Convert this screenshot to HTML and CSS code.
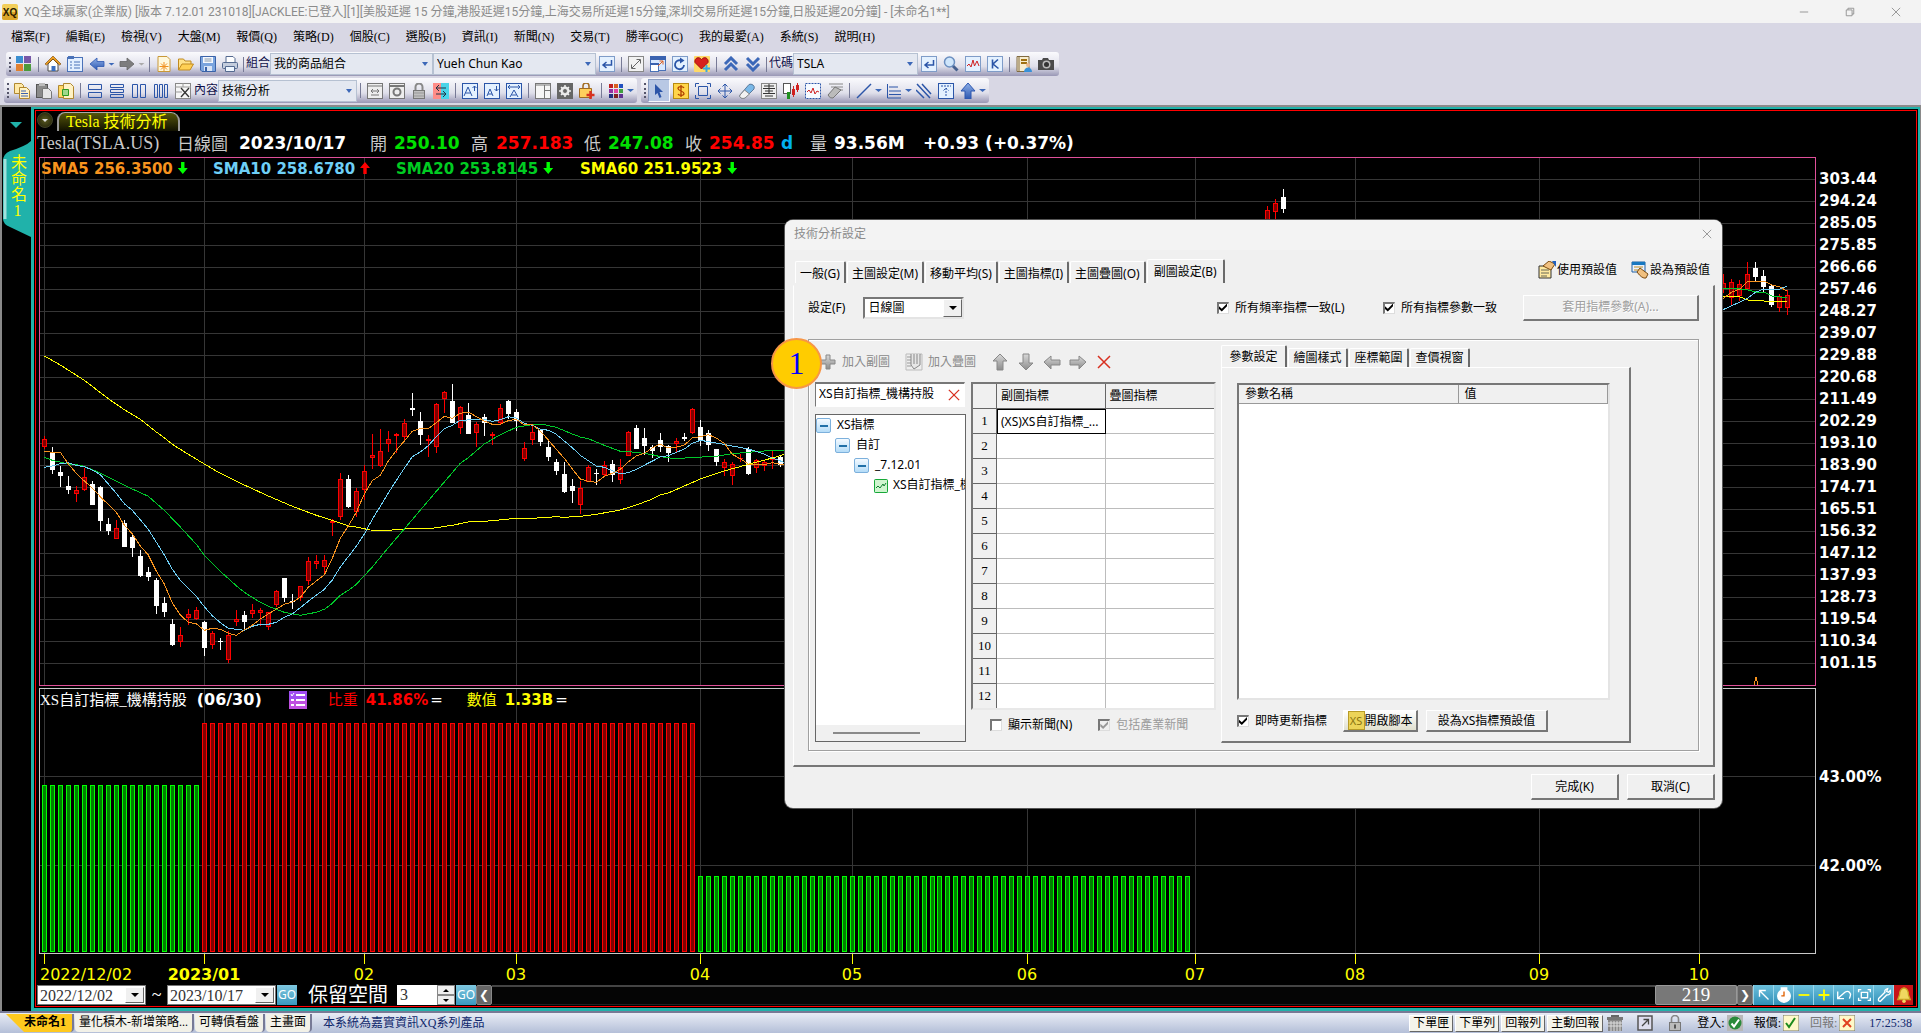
FILE: index.html
```html
<!DOCTYPE html>
<html lang="zh-Hant">
<head>
<meta charset="utf-8">
<title>XQ全球贏家</title>
<link rel="stylesheet" href="styles.css">
</head>
<body>
<svg class="defs" aria-hidden="true">
  <linearGradient id="gb" x1="0" y1="0" x2="0" y2="1"><stop offset="0" stop-color="#8fb0e8"/><stop offset="1" stop-color="#2c57b0"/></linearGradient>
  <linearGradient id="gg" x1="0" y1="0" x2="0" y2="1"><stop offset="0" stop-color="#d8d8d8"/><stop offset="1" stop-color="#8c8c8c"/></linearGradient>
  <symbol id="enter" viewBox="0 0 16 16"><rect x=".5" y=".5" width="15" height="15" fill="#e4f1ff" stroke="#7f9cc8"/><path d="M12.500 4v5H5M7.500 6L4 9l3.500 3" fill="none" stroke="#2b55a8" stroke-width="1.500"/></symbol>
  <symbol id="larrow" viewBox="0 0 16 16"><path d="M1 8l7-6v3.500h7v5H8V14z" stroke-width=".8"/></symbol>
</svg>

<header class="titlebar">
  <svg class="logo" viewBox="0 0 16 16"><rect width="16" height="16" rx="2" fill="#f3cf5a"/><rect y="8" width="16" height="8" rx="2" fill="#dba62a"/><text x="8" y="12" font-size="10" font-weight="bold" text-anchor="middle" fill="#2a1a00" font-family="Liberation Sans, sans-serif">XQ</text></svg>
  <h1>XQ全球贏家(企業版) [版本 7.12.01 231018][JACKLEE:已登入][1][美股延遲 15 分鐘,港股延遲15分鐘,上海交易所延遲15分鐘,深圳交易所延遲15分鐘,日股延遲20分鐘] - [未命名1**]</h1>
  <div class="winbtns">
    <button aria-label="最小化"><svg viewBox="0 0 12 12"><path d="M1 6h10"/></svg></button>
    <button aria-label="還原"><svg viewBox="0 0 12 12"><path d="M1.500 3.500h7v7h-7zM3.500 3.500v-2h7v7h-2"/></svg></button>
    <button aria-label="關閉"><svg viewBox="0 0 12 12"><path d="M1 1l10 10M11 1L1 11"/></svg></button>
  </div>
</header>

<nav class="menu">
  <button>檔案(F)</button><button>編輯(E)</button><button>檢視(V)</button><button>大盤(M)</button><button>報價(Q)</button><button>策略(D)</button><button>個股(C)</button><button>選股(B)</button><button>資訊(I)</button><button>新聞(N)</button><button>交易(T)</button><button>勝率GO(C)</button><button>我的最愛(A)</button><button>系統(S)</button><button>說明(H)</button>
</nav>

<div class="toolbars">
  <div class="toolbar first">
    <i class="grip"></i>
    <button><svg viewBox="0 0 16 16"><path fill="#3b8fd0" d="M0 0h7v7H0z"/><path fill="#7758a8" d="M8 0h7v7H8z"/><path fill="#e08030" d="M0 8h7v7H0z"/><path fill="#4c9a3c" d="M8 8h7v7H8z"/></svg></button>
    <i class="sep"></i>
    <button><svg viewBox="0 0 16 16"><path fill="#fff" stroke="#4b4b4b" d="M3 8v7h10V8L8 3z"/><path fill="#f0a020" d="M8 0L0 8l1.500 1L8 3l6.500 6L16 8z" stroke="#704000" stroke-width=".6"/><path fill="#3a6fc0" d="M6.500 10h4v5h-4z"/></svg></button>
    <button><svg viewBox="0 0 16 16"><rect x=".5" y="1.500" width="15" height="14" fill="#e3efff" stroke="#4a72b8"/><path d="M1 0h6v3H1z" fill="#4a72b8"/><path d="M3 6h2M3 9h2M3 12h2M7 6h6M7 9h6M7 12h6" stroke="#4a72b8"/></svg></button>
    <button><svg viewBox="0 0 16 16" fill="url(#gb)" stroke="#2c57b0"><use href="#larrow"/></svg></button>
    <i class="dd"></i>
    <button><svg class="flip" viewBox="0 0 16 16" fill="#7d7d7d" stroke="#666"><use href="#larrow"/></svg></button>
    <i class="dd dim"></i>
    <i class="sep"></i>
    <button><svg viewBox="0 0 16 16"><path d="M2 .5h9l3 3v12H2z" fill="#fff8dc" stroke="#c89838"/><path d="M8 6v9M3.500 10.500h9M5 7.500l6 6M11 7.500l-6 6" stroke="#f09020"/></svg></button>
    <button><svg viewBox="0 0 16 16"><path d="M.5 14V3h5l1.500 2h6v3" fill="#ffe28a" stroke="#c08a20"/><path d="M.5 14L4 8h11.500L12 14z" fill="#ffd054" stroke="#c08a20"/></svg></button>
    <button><svg viewBox="0 0 16 16"><path d="M.5.5h15v15H2L.5 14z" fill="#7aa4de" stroke="#3a62a8"/><path d="M3 1h10v6H3z" fill="#f4f8ff"/><path d="M4.500 3h7M4.500 5h7" stroke="#89a"/><path d="M4 10h8v5H4z" fill="#d8e4f6"/><path d="M5 11h2v4H5z" fill="#3a62a8"/></svg></button>
    <button><svg viewBox="0 0 16 16"><path d="M4 .5h7l2 2V7H4z" fill="#fff" stroke="#556a90"/><rect x=".5" y="6.500" width="15" height="6" rx="1" fill="#c4cddd" stroke="#556a90"/><path d="M3.500 10.500h9v5h-9z" fill="#eef6ff" stroke="#556a90"/></svg></button>
    <i class="sep thin"></i>
    <label for="grp">組合</label>
    <span class="combo w163"><select id="grp"><option>我的商品組合</option></select></span>
    <span class="combo w163"><select aria-label="使用者"><option>Yueh Chun Kao</option></select></span>
    <button><svg><use href="#enter"/></svg></button>
    <i class="sep"></i>
    <button><svg viewBox="0 0 16 16"><rect x=".5" y=".5" width="15" height="15" fill="#f2f2f2" stroke="#888"/><path d="M4 12l8-8M8.500 3.500h4v4M3.500 8.500v4h4" fill="none" stroke="#666"/></svg></button>
    <button><svg viewBox="0 0 16 16"><rect x=".5" y=".5" width="15" height="14" fill="#d8e8ff" stroke="#4a72b8"/><path d="M0 0h16v4H0z" fill="#3a62b0"/><rect x=".5" y="7.500" width="8" height="8" fill="#fff" stroke="#4a72b8"/><path d="M0 7h9v2H0z" fill="#3a62b0"/><path d="M8 10l5-5M9.500 5h3.500v3.500" stroke="#e06020" fill="none"/></svg></button>
    <button><svg viewBox="0 0 16 16"><rect x=".5" y=".5" width="15" height="15" fill="#e4f1ff" stroke="#7f9cc8"/><path d="M9 4.500A4.500 4.500 0 1 0 12 9" fill="none" stroke="#2b55a8" stroke-width="1.800"/><path d="M8 1.500l4.500 3L8 7.500z" fill="#2b55a8"/></svg></button>
    <button><svg viewBox="0 0 16 16"><rect width="16" height="16" rx="1" fill="#ffd968"/><path d="M7.500 13L1 6.500C0 2 5 0 7.500 3.500 10 0 15 2 14 6.500z" fill="#d8201c" stroke="#a01010"/><path d="M12.500 9v7M9 12.500h7" stroke="#38a8e0" stroke-width="2"/></svg></button>
    <i class="sep"></i>
    <button><svg viewBox="0 0 16 16"><path d="M2 8l6-6 6 6M2 14l6-6 6 6" fill="none" stroke="#3c68b8" stroke-width="3"/></svg></button>
    <button><svg viewBox="0 0 16 16"><path d="M2 2l6 6 6-6M2 8l6 6 6-6" fill="none" stroke="#3c68b8" stroke-width="3"/></svg></button>
    <i class="sep thin"></i>
    <label for="sym">代碼</label>
    <span class="combo w125"><select id="sym"><option>TSLA</option></select></span>
    <button><svg><use href="#enter"/></svg></button>
    <button><svg viewBox="0 0 16 16"><path d="M9.500 9.500l5 5" stroke="#46618f" stroke-width="3"/><circle cx="6.500" cy="6" r="5" fill="#cfe6fb" stroke="#6b8fc0" stroke-width="1.500"/></svg></button>
    <button><svg viewBox="0 0 16 16"><rect x=".5" y=".5" width="15" height="15" fill="#e4f1ff" stroke="#7f9cc8"/><path d="M2 10l2-2 2 3 2-7 1.500 6L12 5l2 5" fill="none" stroke="#d02020"/></svg></button>
    <button><svg viewBox="0 0 16 16"><rect x=".5" y=".5" width="15" height="15" fill="#e4f1ff" stroke="#7f9cc8"/><path d="M5.500 3.500v9M11 3.500L6 8l5.500 4.500" fill="none" stroke="#2b55a8" stroke-width="1.600"/></svg></button>
    <i class="sep"></i>
    <button><svg viewBox="0 0 16 16"><path d="M1 .5h12v15H1z" fill="#f7edd0" stroke="#806a40"/><path d="M3 1v14" stroke="#806a40"/><path d="M5 4h6M5 7h6" stroke="#a07010" stroke-width="2"/><circle cx="12" cy="9" r="2" fill="#e8b890"/><path d="M8 16c0-6 8-6 8 0z" fill="#3890d8"/></svg></button>
    <button><svg viewBox="0 0 16 16"><path d="M0 4h4l1-2h5l1 2h5v10H0z" fill="#4a4a4a"/><circle cx="8.500" cy="8.500" r="4" fill="#bbb"/><circle cx="8.500" cy="8.500" r="2.500" fill="#333"/></svg></button>
  </div>
  <div class="tbrow">
    <div class="toolbar">
      <i class="grip"></i>
      <button><svg viewBox="0 0 16 16"><path d="M.5.5h7l2 2v8h-9z" fill="#ffe9a8" stroke="#b08830"/><path d="M5.500 4.500h7l3 3v8h-10z" fill="#fff2c4" stroke="#b08830"/><path d="M7 8h5M7 10.500h7M7 13h7" stroke="#3a62b0"/></svg></button>
      <button><svg viewBox="0 0 16 16"><rect x=".5" y="1.500" width="11" height="13" fill="#8a8a8a" stroke="#555"/><path d="M3 0h6v3H3z" fill="#bbb"/><path d="M6.500 5.500h6l3 3v7h-9z" fill="#e6e6e6" stroke="#777"/></svg></button>
      <button><svg viewBox="0 0 16 16"><path d="M.5 2.500h9v12h-9z" fill="#ffd968" stroke="#b08830"/><path d="M5.500.5h7l3 3v12h-10z" fill="#fff2c4" stroke="#b08830"/><path d="M4.500 6.500h6v6h-6z" fill="#9fd88a" stroke="#2d9a20"/></svg></button>
      <i class="sep"></i>
      <button><svg viewBox="0 0 16 16" class="ln"><path d="M1.500 1.500h13v5h-13zM1.500 9.500h13v5h-13z"/></svg></button>
      <button><svg viewBox="0 0 16 16" class="ln"><path d="M1.500 1.500h13v3h-13zM1.500 6.500h13v3h-13zM1.500 11.500h13v3h-13z"/></svg></button>
      <button><svg viewBox="0 0 16 16" class="ln"><path d="M1.500 1.500h5v13h-5zM9.500 1.500h5v13h-5z"/></svg></button>
      <button><svg viewBox="0 0 16 16" class="ln"><path d="M1.500 1.500h3v13h-3zM6.500 1.500h3v13h-3zM11.500 1.500h3v13h-3z"/></svg></button>
      <button><svg viewBox="0 0 16 16"><rect x=".5" y=".5" width="15" height="15" fill="#f6f6f6" stroke="#888"/><path d="M0 4h16M0 9h7M8 0v4" stroke="#999"/><path d="M6 5l8 9M14 5l-8 9" stroke="#333" stroke-width="1.300"/></svg></button>
      <label for="cnt">內容</label>
      <span class="combo w139"><select id="cnt"><option>技術分析</option></select></span>
      <i class="sep"></i>
      <button><svg viewBox="0 0 16 16" class="gr"><rect x=".5" y=".5" width="15" height="15"/><path d="M0 3h16M4 8h8M6 6L4 8l2 2M10 6l2 2-2 2M4 12h8"/></svg></button>
      <button><svg viewBox="0 0 16 16" class="gr"><rect x=".5" y=".5" width="15" height="15"/><path d="M0 3h16" stroke-width="2"/><circle cx="8" cy="9" r="3.500" stroke-width="2"/></svg></button>
      <button><svg viewBox="0 0 16 16"><path d="M4.500 8V4a3.500 3.500 0 0 1 7 0v4" fill="none" stroke="#888" stroke-width="2"/><rect x="2.500" y="7.500" width="11" height="8" fill="#c0c0c0" stroke="#777"/><path d="M3 10h10M3 13h10" stroke="#999"/></svg></button>
      <button><svg viewBox="0 0 16 16"><path d="M0 0h8v16H0z" fill="#ff8d88"/><path d="M8 0h8v16H8z" fill="#49d4e8"/><path d="M13 5H4M6 2L3 5l3 3M3 11h9M10 8l3 3-3 3" stroke="#234" fill="none"/></svg></button>
      <i class="sep"></i>
      <button><svg viewBox="0 0 16 16" class="ab"><rect x=".5" y=".5" width="15" height="15"/><path d="M2 13L6 4l4 9M3.500 10h5M12.500 8V3M10.500 5l2-2 2 2"/></svg></button>
      <button><svg viewBox="0 0 16 16" class="ab"><rect x=".5" y=".5" width="15" height="15"/><path d="M3 13l3-7 3 7M4 11h4M12.500 3v5M10.500 6l2 2 2-2"/></svg></button>
      <button><svg viewBox="0 0 16 16" class="ab"><rect x=".5" y=".5" width="15" height="15"/><path d="M4 14l4-7 4 7M5.500 12h5M2 4h12M4 2L2 4l2 2M12 2l2 2-2 2"/></svg></button>
      <i class="sep"></i>
      <button><svg viewBox="0 0 16 16"><rect x=".5" y=".5" width="15" height="15" fill="#f6f6f6" stroke="#777"/><path d="M1 2h14M9.500 2v13M9 7.500h6" stroke="#777"/></svg></button>
      <button><svg viewBox="0 0 16 16"><rect width="16" height="16" fill="#666"/><circle cx="8" cy="8" r="3.500" fill="none" stroke="#eee" stroke-width="2"/><path d="M8 2v12M2 8h12M4 4l8 8M12 4l-8 8" stroke="#eee" stroke-width="1.500"/><circle cx="8" cy="8" r="2" fill="#666"/></svg></button>
      <button><svg viewBox="0 0 16 16"><path d="M4 6V3a3 3 0 0 1 6 0v3" fill="none" stroke="#a06a20" stroke-width="1.500"/><path d="M.5 5.500h12v9H.5z" fill="#ffcf5c" stroke="#a06a20"/><path d="M11.500 8v8M7.500 12h8" stroke="#d83020" stroke-width="2.500"/></svg></button>
      <i class="sep"></i>
      <button><svg viewBox="0 0 16 16"><path d="M1 1h4v4H1z" fill="#c02020"/><path d="M6 1h4v4H6z" fill="#d86020"/><path d="M11 1h4v4h-4z" fill="#2050c0"/><path d="M1 6h4v4H1z" fill="#9030a0"/><path d="M6 6h4v4H6z" fill="#e040a0"/><path d="M11 6h4v4h-4z" fill="#40a040"/><path d="M1 11h4v4H1z" fill="#203080"/><path d="M6 11h4v4H6z" fill="#802020"/><path d="M11 11h4v4h-4z" fill="#603090"/></svg></button>
      <i class="dd"></i>
    </div>
    <div class="toolbar">
      <i class="grip"></i>
      <button class="on"><svg viewBox="0 0 16 16"><path d="M4 1l8 8H8.500l2 5-2 1-2-5L4 12z" fill="#2b55a8"/></svg></button>
      <button><svg viewBox="0 0 16 16"><rect x=".5" y=".5" width="15" height="15" fill="#ffd54a" stroke="#b88a10"/><path d="M11 5c-1-2-6-2-6 .5S11 8 11 10.500s-5 2.500-6 .5M8 2v12" fill="none" stroke="#b04000" stroke-width="1.300"/></svg></button>
      <button><svg viewBox="0 0 16 16" class="ln"><path d="M3.500 3.500h9v9h-9zM.5 4V.5H4M12 .5h3.500V4M15.500 12v3.500H12M4 15.500H.5V12"/></svg></button>
      <button><svg viewBox="0 0 16 16" class="ln"><path d="M8 1v14M1 8h14M5.500 3.500L8 1l2.500 2.500M5.500 12.500L8 15l2.500-2.500M3.500 5.500L1 8l2.500 2.500M12.500 5.500L15 8l-2.500 2.500"/></svg></button>
      <button><svg viewBox="0 0 16 16"><path d="M1 12L10 1.500q2-1 4 .5t1 4L6 15q-2 1-4 0t-1-3z" fill="#79b8e8" stroke="#5a7a9c"/><path d="M1 12l4.500-5 5 4L6 15q-2 1-4 0t-1-3z" fill="#f2f2f2" stroke="#888"/></svg></button>
      <button><svg viewBox="0 0 16 16"><rect x=".5" y=".5" width="15" height="15" fill="#eee" stroke="#888"/><path d="M3 3h10M2 5.500h12M4 8h8M2 10.500h12M4 13h8M8 1v10" stroke="#333"/></svg></button>
      <button><svg viewBox="0 0 16 16"><rect x=".5" y=".5" width="7" height="10" fill="#fff" stroke="#555"/><path d="M4 9h3v7H4z" fill="#209020"/><path d="M10.500 3v11M14.500 0v9" stroke="#d02020"/><path d="M9 6h3v6H9zM13 2h3v5h-3z" fill="#d02020"/></svg></button>
      <button><svg viewBox="0 0 16 16"><rect x=".5" y=".5" width="15" height="15" fill="#f6faff" stroke="#2b55a8" stroke-dasharray="2 1"/><path d="M2 9l2-2 2 3 2-5 2 6 2-3 2 1" fill="none" stroke="#d02020"/></svg></button>
      <button><svg viewBox="0 0 16 16"><path d="M2 1h14M4 4h12M8 7h8" stroke="#888"/><path d="M1 12l7-8 6 3-8 8q-3 1-5-3z" fill="#bbb" stroke="#777"/></svg></button>
      <i class="sep"></i>
      <button><svg viewBox="0 0 16 16" class="ln"><path d="M1 15L15 1" stroke-width="1.500"/></svg></button>
      <i class="dd"></i>
      <button><svg viewBox="0 0 16 16" class="ln"><path d="M1.500 1v14H15M3 4h9M3 8h12M3 11.500h12"/></svg></button>
      <i class="dd"></i>
      <button><svg viewBox="0 0 16 16" class="ln"><path d="M1 1l13 14M6 1l9 10M0 7l8 8" stroke-width="1.500"/></svg></button>
      <button><svg viewBox="0 0 16 16" class="ab"><rect x=".5" y=".5" width="15" height="15"/><path d="M3 3h10M8 13V5M5.500 7.500L8 5l2.500 2.500" stroke-dasharray="2 1"/></svg></button>
      <button><svg viewBox="0 0 16 16"><path d="M8 0l7 8h-4v8H5V8H1z" fill="url(#gb)" stroke="#2c57b0"/></svg></button>
      <i class="dd"></i>
    </div>
  </div>
</div>

<main class="workspace">
  <aside class="side">
    <i class="sidetri"></i>
    <div class="sidetab">
      <svg viewBox="0 0 29 96" preserveAspectRatio="none"><path d="M29 0Q24 5 8 10Q1 13 1 20V78Q1 83 8 86L29 96z" fill="#20b2aa"/><path d="M3 18v60" stroke="#d9f5f2" stroke-width="3" opacity=".7"/></svg>
      <a href="#">未命名1</a>
    </div>
  </aside>
  <section class="window">
    <div class="frame">
      <div class="tabrow">
        <button class="orb" aria-label="選單"></button>
        <a class="ctab" href="#">Tesla 技術分析</a>
      </div>
      <div class="quote">
        <span class="t">Tesla(TSLA.US)</span><span>日線圖</span><b>2023/10/17</b><span>開</span><b class="g">250.10</b><span>高</span><b class="r">257.183</b><span>低</span><b class="g">247.08</b><span>收</span><b class="r">254.85</b><b class="c">d</b><span>量</span><b>93.56M</b><b>+0.93 (+0.37%)</b>
      </div>
      <div class="price row">
        <div class="plot pink">
          <svg id="price" viewBox="40 158 1775 527" preserveAspectRatio="none"></svg>
          <div class="sma">
            <span class="o">SMA5 256.3500<i class="dn"></i></span><span class="b">SMA10 258.6780<i class="up"></i></span><span class="gr2">SMA20 253.8145<i class="dn"></i></span><span class="y">SMA60 251.9523<i class="dn"></i></span>
          </div>
        </div>
        <ol class="scale" id="scale"></ol>
      </div>
      <div class="ind row">
        <div class="plot">
          <svg id="holding" viewBox="40 689 1775 264" preserveAspectRatio="none"></svg>
          <div class="indhead">
            <span class="w">XS自訂指標_機構持股</span><b>(06/30)</b>
            <svg class="menuic" viewBox="0 0 18 18"><path d="M0 0h18v18H0z" fill="#a04df0"/><path d="M0 9h18v9H0z" fill="#c050e0"/><path d="M7 4h9M7 9h9M7 14h9M2 9h3M2 14h3" stroke="#fff" stroke-width="2"/><path d="M2 3l1 2 2-3" fill="none" stroke="#fff"/></svg>
            <span class="r">比重</span><b class="r">41.86%</b><b class="eq">=</b>
            <span class="y">數值</span><b class="y">1.33B</b><b class="eq">=</b>
          </div>
        </div>
        <div class="scale2"><span>43.00%</span><span>42.00%</span></div>
      </div>
      <div class="times">
        <span class="first">2022/12/02</span><span class="bold">2023/01</span><span>02</span><span>03</span><span>04</span><span>05</span><span>06</span><span>07</span><span>08</span><span>09</span><span>10</span>
      </div>
      <div class="range">
        <span class="date"><select aria-label="開始日期"><option>2022/12/02</option></select></span>
        <span class="tilde">~</span>
        <span class="date"><select aria-label="結束日期"><option>2023/10/17</option></select></span>
        <button class="go">GO</button>
        <label for="keep">保留空間</label>
        <span class="spin"><input id="keep" value="3"><span><button aria-label="加"></button><button aria-label="減"></button></span></span>
        <button class="go">GO</button>
        <button class="nav">❮</button>
        <div class="track"><div class="thumb">219</div></div>
        <button class="nav">❯</button>
        <div class="acts">
          <button><svg viewBox="0 0 20 20"><path d="M5 12V5h7M5 5l10 10"/></svg></button>
          <button><svg viewBox="0 0 20 20"><circle cx="10" cy="11" r="7" fill="#fff"/><path d="M7 2h6v3H7z" fill="#fff"/><path d="M10 6v5H7" stroke="#e06000"/></svg></button>
          <button><svg viewBox="0 0 20 20"><path d="M4 10h12" stroke="#ff0" stroke-width="2"/></svg></button>
          <button><svg viewBox="0 0 20 20"><path d="M4 10h12M10 4v12" stroke="#ff0" stroke-width="2"/></svg></button>
          <button><svg viewBox="0 0 20 20"><path d="M3 6v8h7M3 14l8-7q3-2 5 0t1 4l-1 3"/></svg></button>
          <button><svg viewBox="0 0 20 20"><path d="M7 7h7v6H7zM4 7V4h3M14 4h3v3M17 13v3h-3M7 16H4v-3"/></svg></button>
          <button><svg viewBox="0 0 20 20"><path d="M4 14l7-7q-1-3 3-4l-1 3 2 1 2-2q1 5-4 5l-7 7q-3 0-2-3z"/></svg></button>
          <button class="bell"><svg viewBox="0 0 20 20"><path d="M10 2q5 1 5 8l2 5H3l2-5q0-7 5-8z" fill="#f0d860" stroke="#c8a020"/><circle cx="10" cy="17" r="2" fill="#f0d860" stroke="none"/></svg></button>
        </div>
      </div>
    </div>
  </section>
</main>

<footer class="status">
  <nav class="pages">
    <a class="cur" href="#">未命名1</a><a href="#">量化積木-新增策略...</a><a href="#">可轉債看盤</a><a href="#">主畫面</a>
  </nav>
  <span class="note">本系統為嘉實資訊XQ系列產品</span>
  <div class="sbtns"><button>下單匣</button><button>下單列</button><button>回報列</button><button>主動回報</button></div>
  <svg class="sic" viewBox="0 0 16 16"><path d="M4 0h8v3H4z" fill="#666"/><path d="M0 2h16v3H0z" fill="#777"/><path d="M1 5h14v11H1z" fill="#888"/><path d="M4 6v10M7 6v10M10 6v10M13 6v10M1 8h14M1 11h14" stroke="#ddd"/></svg>
  <svg class="sic" viewBox="0 0 16 16"><rect x="1" y="1" width="14" height="14" fill="#dde" stroke="#555" stroke-width="1.500"/><path d="M5 11l6-6M6.500 4.500h5v5" fill="none" stroke="#444" stroke-width="1.300"/></svg>
  <svg class="sic" viewBox="0 0 16 16"><path d="M4.500 8V4a3.500 3.500 0 0 1 7 0v4" fill="none" stroke="#888" stroke-width="1.600"/><rect x="2.500" y="7.500" width="11" height="8" fill="#bbb" stroke="#777"/><path d="M8 9.500v4" stroke="#555" stroke-width="2"/></svg>
  <span class="st">登入:<svg viewBox="0 0 16 16"><rect width="16" height="16" fill="#b8b8b8"/><circle cx="8" cy="8" r="6.500" fill="#2a8a3a"/><path d="M4.500 8.500l2.500 3 5-7" fill="none" stroke="#fff" stroke-width="2"/></svg></span>
  <span class="st">報價:<svg viewBox="0 0 16 16"><rect width="16" height="16" fill="#fff8c8" stroke="#776"/><path d="M3 8l3 4 6-9" fill="none" stroke="#1c8a1c" stroke-width="2"/></svg></span>
  <span class="st off">回報:<svg viewBox="0 0 16 16"><rect width="16" height="16" fill="#fff8c8" stroke="#776"/><path d="M4 4l8 8M12 4l-8 8" stroke="#e04020" stroke-width="2"/></svg></span>
  <time>17:25:38</time>
</footer>

<section class="dialog" role="dialog" aria-label="技術分析設定">
  <header><h2>技術分析設定</h2><button aria-label="關閉"><svg viewBox="0 0 12 12"><path d="M1 1l10 10M11 1L1 11"/></svg></button></header>
  <div class="dtop">
    <div class="tabs main"><button>一般(G)</button><button>主圖設定(M)</button><button>移動平均(S)</button><button>主圖指標(I)</button><button>主圖疊圖(O)</button><button class="sel">副圖設定(B)</button></div>
    <button class="def"><svg viewBox="0 0 18 18"><path d="M1 5h12v12H1z" fill="#ffe9a0" stroke="#333"/><path d="M3 9h8M3 12h8M3 15h6" stroke="#665"/><path d="M5 5l6-5 6 3-4 6-4-2z" fill="#f0c080" stroke="#7a4a10"/><path d="M14 0h4v6z" fill="#2060c0"/></svg>使用預設值</button>
    <button class="def"><svg viewBox="0 0 18 18"><path d="M1 1h13v10H1z" fill="#e8f0ff" stroke="#2060a0"/><path d="M1 1h13v3H1z" fill="#1878c0"/><path d="M3 6h9M3 9h7" stroke="#c09020"/><path d="M6 11l3-4 8 6-2 4q-4 1-9-6z" fill="#f0c080" stroke="#7a4a10"/></svg>設為預設值</button>
  </div>
  <div class="panel">
    <div class="settings">
      <label for="freq">設定(F)</label>
      <span class="drop"><select id="freq"><option>日線圖</option></select></span>
      <label class="ck c1"><input type="checkbox" checked>所有頻率指標一致(L)</label>
      <label class="ck c2"><input type="checkbox" checked>所有指標參數一致</label>
      <button class="btn apply" disabled>套用指標參數(A)...</button>
    </div>
    <div class="group">
      <div class="left">
        <div class="acts2">
          <button><svg viewBox="0 0 18 18"><path d="M7 2h4v5h5v4h-5v5H7v-5H2V7h5z" fill="url(#gg)" stroke="#888"/></svg>加入副圖</button>
          <button><svg viewBox="0 0 18 18"><path d="M1 1h16v16H1z" fill="#eee" stroke="#bbb"/><path d="M2 4h4M2 7h4M2 10h4M2 13h4" stroke="#999"/><path d="M6 1v11l3 4 3-2 3-2V1M9 1v10M12 1v10" fill="#e6e6e6" stroke="#888"/></svg>加入疊圖</button>
          <button class="ico"><svg viewBox="0 0 18 18"><path d="M9 1l7 7h-4v9H6V8H2z" fill="url(#gg)" stroke="#888"/></svg></button>
          <button class="ico"><svg viewBox="0 0 18 18"><path d="M9 17l7-7h-4V1H6v9H2z" fill="url(#gg)" stroke="#888"/></svg></button>
          <button class="ico"><svg viewBox="0 0 18 18"><path d="M1 9l7-6v4h9v5H8v4z" fill="url(#gg)" stroke="#888"/></svg></button>
          <button class="ico"><svg viewBox="0 0 18 18"><path d="M17 9l-7-6v4H1v5h9v4z" fill="url(#gg)" stroke="#888"/></svg></button>
          <button class="ico"><svg viewBox="0 0 18 18"><path d="M3 3l12 12M15 3L3 15" stroke="#d83020" stroke-width="1.500"/></svg></button>
        </div>
        <div class="cols">
          <div class="treecol">
            <div class="search"><input aria-label="搜尋指標" value="XS自訂指標_機構持股"><button aria-label="清除"><svg viewBox="0 0 14 14"><path d="M1 1l12 12M13 1L1 13" stroke="#d83020" stroke-width="1.500"/></svg></button></div>
            <div class="treebox">
              <ul class="tree">
                <li><i class="ex"></i>XS指標
                  <ul><li><i class="ex"></i>自訂
                    <ul><li><i class="ex"></i>_7.12.01
                      <ul><li class="leaf"><svg viewBox="0 0 14 14"><rect x=".5" y=".5" width="13" height="13" fill="#cff5cf" stroke="#18a838"/><path d="M2 9l2-2 2 2 3-4 1 2 2-3" fill="none" stroke="#108030"/></svg>XS自訂指標_機</li></ul>
                    </li></ul>
                  </li></ul>
                </li>
              </ul>
              <div class="hbar"><i></i></div>
            </div>
          </div>
          <div class="tablecol">
            <div class="sunk">
              <table>
                <thead><tr><th></th><th>副圖指標</th><th>疊圖指標</th></tr></thead>
                <tbody>
                  <tr><th>1</th><td class="act">(XS)XS自訂指標_...</td><td></td></tr>
                  <tr><th>2</th><td></td><td></td></tr>
                  <tr><th>3</th><td></td><td></td></tr>
                  <tr><th>4</th><td></td><td></td></tr>
                  <tr><th>5</th><td></td><td></td></tr>
                  <tr><th>6</th><td></td><td></td></tr>
                  <tr><th>7</th><td></td><td></td></tr>
                  <tr><th>8</th><td></td><td></td></tr>
                  <tr><th>9</th><td></td><td></td></tr>
                  <tr><th>10</th><td></td><td></td></tr>
                  <tr><th>11</th><td></td><td></td></tr>
                  <tr><th>12</th><td></td><td></td></tr>
                </tbody>
              </table>
            </div>
            <div class="news">
              <label class="ck"><input type="checkbox">顯示新聞(N)</label>
              <label class="ck dis"><input type="checkbox" checked disabled>包括產業新聞</label>
            </div>
          </div>
        </div>
      </div>
      <div class="right">
        <div class="tabs sub"><button class="sel">參數設定</button><button>繪圖樣式</button><button>座標範圍</button><button>查價視窗</button></div>
        <div class="subpanel">
          <div class="params"><table><thead><tr><th>參數名稱</th><th>值</th></tr></thead></table></div>
          <div class="pbtns">
            <label class="ck"><input type="checkbox" checked>即時更新指標</label>
            <button class="btn script"><span>XS</span>開啟腳本</button>
            <button class="btn preset">設為XS指標預設值</button>
          </div>
        </div>
      </div>
    </div>
  </div>
  <footer><button class="btn">完成(K)</button><button class="btn">取消(C)</button></footer>
  <span class="badge">1</span>
</section>
<script src="chart.js"></script>
</body>
</html>
```
FILE: styles.css
```css
* { box-sizing: border-box; }
html, body { margin: 0; }
body {
  display: flex; flex-direction: column; height: 100vh; min-height: 700px; overflow: hidden;
  position: relative; background: #d8d7e4; color: #000;
  font: 12px/16px "Noto Sans", "Noto Sans CJK TC", sans-serif;
}
button, select, input { font: inherit; color: inherit; margin: 0; padding: 0; border: 0; background: none; border-radius: 0; }
button { display: flex; align-items: center; justify-content: center; white-space: nowrap; }
select { appearance: none; outline: 0; }
a { color: inherit; text-decoration: none; }
ul, ol { list-style: none; margin: 0; padding: 0; }
h1, h2 { margin: 0; font-size: 12px; font-weight: 400; }
svg { display: block; flex: none; }
.defs { width: 0; height: 0; position: absolute; }

/* title and menu */
.titlebar { display: flex; align-items: center; height: 23px; background: #f3f3f3; color: #8b8b8b; padding-left: 2px; }
.titlebar h1 { flex: 1; margin-left: 6px; white-space: nowrap; font-family: Roboto, "Noto Sans CJK TC", sans-serif; }
.logo { width: 16px; height: 16px; }
.winbtns { display: flex; padding-right: 2px; }
.winbtns button { width: 46px; height: 20px; }
.winbtns svg, .dialog header svg { width: 10px; height: 10px; fill: none; stroke: #888; }
.menu { display: flex; gap: 16px; height: 27px; padding-left: 11px; font-family: "Liberation Serif", "Noto Sans CJK TC", serif; }

/* toolbars */
.toolbars { height: 55px; padding: 2px 4px; display: flex; flex-direction: column; gap: 2px; flex: none; }
.tbrow { display: flex; gap: 4px; }
.toolbar {
  display: flex; align-items: center; align-self: flex-start; height: 25px; padding: 0 2px 0 1px; border-radius: 3px;
  background: linear-gradient(#fafafd, #dfdfea 60%, #9997b5);
}
.toolbar.first { margin-left: 2px; }
.toolbar > button { width: 22px; height: 23px; flex: none; }
.toolbar > button.on { background: #b8c8e4; border: 1px solid #f6f8fc; border-top-color: #8a9cc0; border-left-color: #8a9cc0; }
.toolbar svg { width: 16px; height: 16px; }
.flip { transform: scaleX(-1); }
.grip { width: 2px; height: 15px; margin: 0 2px; border-left: 2px dotted #55556a; }
.sep { width: 1px; height: 15px; background: #777a96; margin: 0 3px; }
.sep.thin { margin: 0 2px; }
.dd { width: 8px; height: 3px; border: 3px solid transparent; border-top-color: #3c68b8; border-bottom: 0; border-right-width: 5px; }
.dd { width: 7px; height: 3px; margin-right: 1px; border: 0; background: #3c68b8; clip-path: polygon(0 0, 100% 0, 50% 100%); }
.dd.dim { background: #aaa; }
.toolbar label { color: #10104a; padding-bottom: 2px; }
.combo { position: relative; }
.combo select { width: 100%; height: 22px; background: #e4e8f1; border: 1px solid #b6c1d2; padding: 0 3px; display: block; }
.combo::after, .drop::after, .date::after {
  content: ""; position: absolute; right: 5px; top: 9px; border: 3px solid transparent; border-top: 4px solid #3c68b8; border-bottom: 0; pointer-events: none;
}
.w163 { width: 163px; } .w125 { width: 125px; } .w139 { width: 139px; }
.ln { fill: none; stroke: #2b55a8; }
.gr { fill: #eee; stroke: #777; }
.ab { fill: #e4f1ff; stroke: #2b55a8; }
.ab path, .gr path { fill: none; }

/* workspace */
.workspace { flex: 1; min-height: 0; display: flex; background: #000; border: solid #8a8a8a; border-width: 2px 1px 0 2px; }
.side { width: 29px; }
.sidetri { display: block; width: 12px; margin: 15px 0 0 8px; border: 6px solid transparent; border-top-color: #20b2aa; border-bottom: 0; }
.sidetab { position: relative; margin-top: 13px; height: 96px; }
.sidetab svg { width: 100%; height: 100%; }
.sidetab a { position: absolute; inset: 13px 0 0 0; writing-mode: vertical-rl; text-orientation: upright; font: 16px/28px "Liberation Serif", "Noto Sans CJK TC", serif; color: #ff0; }
.window { flex: 1; min-width: 0; display: flex; border: solid #20b2aa; border-width: 2px 2px 3px 3px; padding: 1px; }
.frame { flex: 1; min-width: 0; display: flex; flex-direction: column; border: 1px solid #f00; color: #fff; }
.tabrow { display: flex; height: 20px; padding: 1px 0 0 1px; }
.orb { width: 16px; height: 16px; border-radius: 50%; background: radial-gradient(#5a5a20, #1c1c08); border: 1px solid #444428; }
.orb::after { content: ""; border: 3px solid transparent; border-top-color: #ddd; border-bottom: 0; }
.ctab { margin-left: 4px; padding: 0 10px 0 7px; border-top: 1px solid #aaa; border-left: 2px solid #999; border-right: 2px solid #999; border-radius: 8px 9px 0 0; background: linear-gradient(#55550a, #111100); color: #ff0; font: 16px/18px "Liberation Serif", "Noto Sans CJK TC", serif; }
.quote {
  display: grid; grid-template-columns: 140px 62px 131px 24px 77px 25px 88px 24px 77px 24px 72px 29px 24px 89px auto;
  height: 26px; line-height: 25px; padding-left: 1px; white-space: nowrap; color: #c8c8c8; font-size: 17px; overflow: hidden;
}
.quote .t { font-family: "Liberation Serif", serif; font-size: 18px; }
.quote b { color: #fff; }
b, .sma, .scale, .scale2, .times { font-family: "DejaVu Sans", Verdana, sans-serif; }
.frame .g { color: #00e000; } .frame .r { color: #f00; } .frame .c { color: #00b0f0; } .frame .y { color: #ff0; }
.row { display: flex; padding-left: 3px; min-height: 0; }
.price { flex: 529 0 0; margin-bottom: 2px; }
.ind { flex: 266 0 0; }
.plot { position: relative; flex: 1; min-width: 0; border: 1px solid #c8c8c8; }
.plot.pink { border-color: #e0509a; }
.plot > svg { position: absolute; width: 100%; height: 100%; shape-rendering: crispEdges; }
.sma, .indhead { position: relative; white-space: nowrap; font-weight: 700; }
.sma { display: grid; grid-template-columns: 172px 183px 184px auto; font-size: 15px; line-height: 22px; padding-left: 1px; }
.sma .o { color: #f7931e; } .sma .b { color: #6ecff6; } .sma .gr2 { color: #0c2; }
.sma i { display: inline-block; width: 10px; height: 12px; margin-left: 5px; background: #0f0; clip-path: polygon(33% 0, 67% 0, 67% 50%, 100% 50%, 50% 100%, 0 50%, 33% 50%); }
.sma i.up { background: #f00; transform: rotate(180deg); }
.scale, .scale2 { width: 100px; padding-left: 3px; font-size: 15px; font-weight: 700; line-height: 18px; }
.scale { display: flex; flex-direction: column; padding-top: 11px; padding-bottom: 12px; }
.scale li { flex: 1; display: flex; align-items: center; min-height: 0; }
.scale2 { display: grid; grid-template-rows: 89fr 89fr; padding: 44px 0 44px 3px; align-items: center; }
.indhead { display: flex; align-items: center; height: 21px; font-size: 16px; }
.indhead span { font: 15px/20px "Liberation Serif", "Noto Sans CJK TC", serif; }
.indhead span + b { margin: 0 0 0 8px; }
.indhead .w + b { margin: 0 27px 0 10px; }
.indhead .eq { margin: 0 24px 0 2px; font-weight: 400; font-size: 15px; }
.indhead b.y, .indhead b.r { font-size: 15px; }
.menuic { width: 18px; height: 18px; margin-right: 21px; }
.times { display: grid; height: 30px; grid-template-columns: 160fr 160fr 152fr 184fr 152fr 175fr 168fr 160fr 184fr 160fr 117fr; padding: 0 100px 0 8px; font-size: 16px; line-height: 18px; color: #ff0; }
.times span { width: 120px; margin-left: -60px; text-align: center; white-space: nowrap; }
.times span::before { content: ""; display: block; width: 1px; height: 10px; margin: 0 auto 2px 60px; background: #ff0; }
.times .first { text-align: left; margin-left: -4px; }
.times .first::before { margin-left: 4px; }
.times .bold { font-weight: 700; }
.range { display: flex; height: 22px; padding: 0 3px 0 1px; align-items: center; font-family: "Liberation Serif", "Noto Sans CJK TC", serif; }
.range label { font-size: 20px; line-height: 20px; margin: 0 9px 0 11px; }
.date { position: relative; width: 109px; height: 20px; background: #fff; border: 1px solid #777; color: #333; }
.date select { width: 88px; height: 18px; padding: 2px 0 0 2px; font-size: 16px; }
.date::before, .drop::before { content: ""; position: absolute; right: 1px; top: 1px; bottom: 1px; width: 17px; background: #f0f0f0; border: 1px solid #fff; border-right-color: #666; border-bottom-color: #666; pointer-events: none; }
.date::after, .drop::after { right: 6px; top: 7px; border-width: 4px; border-top-color: #000; }
.tilde { width: 21px; text-align: center; font-size: 18px; }
.go { width: 20px; height: 20px; margin-left: 1px; background: linear-gradient(#7fc8e0, #3a98be); font-family: "Noto Sans", sans-serif; }
.spin { display: flex; width: 58px; height: 20px; background: #fff; color: #333; }
.spin input { width: 40px; font-size: 16px; padding-left: 3px; }
.spin > span { display: flex; flex-direction: column; width: 18px; }
.spin button { flex: 1; background: #eee; border: 1px solid #888; }
.spin button::after { content: ""; border: 3px solid transparent; border-top: 3px solid #000; border-bottom: 0; }
.spin button:first-child::after { transform: rotate(180deg); }
.nav { width: 16px; height: 20px; background: #666; color: #fff; border: 1px solid #888; border-radius: 2px; font-family: "DejaVu Sans", sans-serif; }
.track { flex: 1; height: 20px; display: flex; justify-content: flex-end; background: #050505; border-top: 2px solid #444; border-bottom: 1px solid #222; }
.thumb { width: 82px; margin: -2px 0 -1px; background: #787878; border: 1px solid #999; border-radius: 2px; text-align: center; font-size: 19px; line-height: 18px; }
.acts { display: flex; }
.acts button { width: 20px; height: 20px; background: linear-gradient(#6cc0dc, #2f8fb8); border-left: 1px solid #9bd6ea; }
.acts svg { width: 18px; height: 18px; fill: none; stroke: #fff; stroke-width: 1.5; }
.acts .bell { background: #c81418; }

/* status bar */
.status { flex: none; display: flex; align-items: center; height: 22px; padding: 0 9px 0 6px; border-top: 2px solid #777a96; background: linear-gradient(#e8ecf5, #b4bfd8); font-family: "Liberation Serif", "Noto Sans CJK TC", serif; }
.pages { display: flex; height: 18px; }
.pages a { padding: 0 4px; line-height: 17px; margin-right: 1px; background: #f2f1e8; border-right: 2px solid #777a96; border-radius: 0 0 4px 4px; white-space: nowrap; }
.pages .cur { padding: 0 6px 0 18px; background: #ffc91e; font-weight: 700; clip-path: polygon(0 0, 100% 0, 100% 100%, 18px 100%); }
.note { flex: 1; margin-left: 10px; color: #10286c; }
.sbtns { display: flex; gap: 2px; margin-right: 4px; }
.sbtns button { height: 17px; padding: 0 3px; background: #f4f3ea; border: 1px solid #fff; border-right-color: #666; border-bottom-color: #666; }
.sic { width: 16px; height: 16px; margin-right: 14px; }
.st { display: flex; align-items: center; gap: 2px; margin-right: 11px; white-space: nowrap; }
.st svg { width: 16px; height: 16px; }
.st.off { color: #777; }
.status time { color: #10286c; margin-left: 3px; }

/* dialog */
.dialog { position: absolute; left: 785px; top: 220px; width: 937px; background: #f0f0f0; border-radius: 8px; box-shadow: 0 0 0 1px #555; white-space: nowrap; }
.dialog > header { display: flex; align-items: center; justify-content: space-between; height: 30px; padding: 0 10px 2px 9px; background: #f3f3f3; border-radius: 8px 8px 0 0; color: #8b8b8b; }
.dtop { display: flex; align-items: flex-start; height: 35px; padding: 9px 12px 0 10px; gap: 14px; }
.tabs { display: flex; align-items: flex-end; }
.tabs button { border: 2px solid #fff; border-right-color: #6a6a6a; border-bottom: 0; border-top-width: 1px; border-left-width: 1px; border-radius: 2px 2px 0 0; }
.tabs.main { flex: 1; height: 24px; gap: 1px; }
.tabs.main button { height: 22px; padding: 3px 4px 0; }
.tabs.main button.sel { height: 24px; padding: 0 6px; }
.def { height: 22px; gap: 1px; }
.def svg { width: 18px; height: 18px; }
.panel { margin: 0 7px 0 8px; border: 1px solid #fff; border-right: 2px solid #777; border-bottom: 2px solid #777; border-top-color: #f0f0f0; padding: 0 14px 14px 14px; }
.settings { display: flex; align-items: center; height: 53px; padding-bottom: 10px; }
.drop { position: relative; width: 101px; height: 22px; margin-left: 18px; background: #fff; border: 2px solid #777; border-right-color: #e4e4e4; border-bottom-color: #e4e4e4; }
.drop::before { right: 0; top: 0; bottom: 0; }
.drop select { width: 82px; height: 18px; padding-left: 3px; }
.drop::after { right: 5px; }
.ck { display: flex; align-items: center; gap: 6px; }
.c1 { margin-left: auto; width: 166px; }
.c2 { width: 140px; }
.ck input { appearance: none; width: 12px; height: 12px; background: #fff; border: solid #777; border-width: 2px 1px 1px 2px; border-right-color: #ddd; border-bottom-color: #ddd; }
.ck input:checked::after { content: ""; display: block; width: 8px; height: 8px; background: #000; clip-path: polygon(0 35%, 35% 65%, 100% 0, 100% 35%, 35% 100%, 0 70%); }
.ck input:disabled { background: #f0f0f0; }
.ck input:disabled::after { background: #999; }
.ck.dis { color: #9a9a9a; }
.btn { height: 22px; background: #f0f0f0; border: 1px solid #fff; border-right: 2px solid #777; border-bottom: 2px solid #777; }
.btn:disabled { color: #a0a0a0; text-shadow: 1px 1px #fff; }
.apply { width: 176px; height: 26px; }
.group { display: flex; gap: 5px; height: 412px; border: 1px solid #a0a0a0; padding: 0 0 0 6px; box-shadow: inset 1px 1px #fff, 1px 1px #fff; }
.acts2 { display: flex; align-items: center; height: 42px; padding: 2px 0 0 4px; color: #8a8a8a; }
.acts2 svg { width: 18px; height: 18px; }
.acts2 button { gap: 5px; margin-right: 15px; }
.acts2 .ico { margin-right: 8px; }
.cols { display: flex; gap: 5px; }
.treecol { width: 151px; }
.search { display: flex; height: 25px; margin: 0 1px 7px 0; background: #fff; border: solid #777; border-width: 2px 1px 1px; border-right-color: #fff; border-bottom-color: #fff; }
.search input { flex: 1; min-width: 0; height: 18px; padding-left: 3px; outline: 0; }
.search button { width: 20px; }
.search svg { width: 12px; height: 12px; }
.treebox { display: flex; flex-direction: column; height: 328px; background: #fff; border: 1px solid #666; overflow: hidden; }
.tree { flex: 1; line-height: 20px; }
.tree ul { padding-left: 19px; }
.ex, .leaf svg { display: inline-block; width: 15px; height: 15px; margin-right: 6px; vertical-align: middle; border: 1px solid #7cb0dc; border-radius: 2px; background: linear-gradient(#f4faff, #b4dcf8); }
.ex::after { content: ""; display: block; width: 8px; height: 2px; margin: 6px 0 0 3px; background: #2070a8; }
.leaf svg { width: 14px; height: 14px; margin: 0 5px 0 1px; border: 0; }
.hbar { height: 16px; background: #f0f0f0; padding: 7px 0 0 17px; }
.hbar i { display: block; width: 87px; height: 2px; background: #8a8a8a; }
.tablecol { width: 245px; }
.sunk { height: 328px; overflow: hidden; background: #fff; border: 2px solid #777; border-right-color: #e8e8e8; border-bottom-color: #e8e8e8; }
.sunk table { width: 100%; table-layout: fixed; border-collapse: separate; border-spacing: 0; }
.sunk th, .sunk td { height: 25px; padding: 0 4px; font-weight: 400; text-align: left; border: solid #bcbcbc; border-width: 0 1px 1px 0; overflow: hidden; }
.sunk th { background: #f0f0f0; border-color: #666; }
.sunk th:first-child { width: 24px; padding: 0; text-align: center; font-family: "Liberation Serif", serif; font-size: 13px; }
.sunk tr > :last-child { border-right: 0; }
.sunk td.act { border: 1px solid #000; padding: 0 3px; }
.news { display: flex; gap: 26px; padding: 7px 0 0 19px; }
.right { width: 410px; padding-top: 5px; }
.tabs.sub { height: 22px; gap: 1px; }
.tabs.sub button { height: 19px; width: 60px; }
.tabs.sub .sel { height: 22px; width: 66px; }
.subpanel { height: 376px; padding: 15px 19px 0 15px; border: solid #777; border-width: 1px 2px 2px 1px; border-top-color: #fff; border-left-color: #fff; }
.params { height: 317px; background: #fff; border: 2px solid #777; border-right-color: #e4e4e4; border-bottom-color: #e4e4e4; }
.params table { width: 100%; border-collapse: collapse; table-layout: fixed; }
.params th { height: 18px; padding: 0 6px; line-height: 14px; background: #f0f0f0; border: solid #999; border-width: 0 1px 1px 0; text-align: left; font-weight: 400; }
.params th:first-child { width: 219px; }
.pbtns { display: flex; align-items: center; padding-top: 10px; }
.script { width: 75px; margin-left: 16px; background: linear-gradient(#fff, #e0e0d0); }
.script span { width: 17px; line-height: 17px; background: #ecd458; color: #8a7410; border: 1px solid #b89c28; font-size: 11px; }
.preset { width: 122px; margin-left: 8px; }
.dialog > footer { display: flex; justify-content: flex-end; gap: 8px; height: 41px; padding: 7px 7px 0; }
.dialog > footer .btn { width: 88px; height: 26px; }
.badge { position: absolute; left: -14px; top: 118px; width: 51px; height: 51px; border-radius: 50%; background: #fc0; border: 2px solid #f79646; color: #00f; text-align: center; font: 32px/46px "Liberation Serif", serif; }
```
FILE: chart.js
```js
const NS = "http://www.w3.org/2000/svg";
const price = document.getElementById("price");
const holding = document.getElementById("holding");
const scale = document.getElementById("scale");

function add(parent, tag, attrs) {
  const el = document.createElementNS(NS, tag);
  for (const k in attrs) el.setAttribute(k, attrs[k]);
  parent.appendChild(el);
}
const barX = i => 44 + Math.round(i * 7.9955);

// grid
const months = [0, 20, 40, 59, 82, 101, 123, 144, 164, 187, 207];
const prices = ["303.44", "294.24", "285.05", "275.85", "266.66", "257.46", "248.27", "239.07", "229.88", "220.68", "211.49", "202.29", "193.10", "183.90", "174.71", "165.51", "156.32", "147.12", "137.93", "128.73", "119.54", "110.34", "101.15"];
prices.forEach((p, i) => {
  add(price, "rect", { x: 40, y: 179 + i * 22, width: 1775, height: 1, fill: "#363636" });
  const li = document.createElement("li");
  li.textContent = p;
  scale.appendChild(li);
});
for (const m of months) {
  add(price, "rect", { x: barX(m), y: 158, width: 1, height: 527, fill: "#363636" });
  add(holding, "rect", { x: barX(m), y: 689, width: 1, height: 264, fill: "#363636" });
}
for (const y of [776, 865]) add(holding, "rect", { x: 40, y, width: 1775, height: 1, fill: "#363636" });

// candles: colour, high, body top, body bottom, low; heights in thirds of a unit below y = 330
const candles = `r318,327,351,357 w351,369,419,432 w408,426,438,471 w438,468,480,492 r468,480,492,516 r414,441,480,483
w453,462,525,525 w468,471,573,603 w564,582,603,615 r570,594,627,627 w570,579,651,651 w615,621,654,681 w660,678,738,741
w711,726,741,753 w744,750,828,852 w801,819,846,861 w867,882,945,948 r891,915,936,951 r837,852,864,885 r831,840,867,869
w873,876,954,978 r903,909,945,957 w924,933,936,960 r903,915,990,999 r840,867,876,888 w843,855,876,900 r822,840,852,864
r834,840,849,888 r846,846,891,900 r780,783,825,831 w744,744,804,816 w792,813,816,837 r768,768,804,812 r681,693,753,765
r675,693,702,717 r675,690,711,735 r567,574,579,618 r429,447,561,570 w435,447,531,534 r474,483,546,561 r405,423,480,510
r312,375,384,417 r297,363,408,411 r303,327,342,366 r309,312,318,369 r267,279,321,333 w189,234,240,258 w246,273,315,345
r315,327,333,381 r219,222,351,369 r183,186,207,249 w162,213,279,279 r228,231,294,312 w219,255,312,312 r276,282,309,351
w252,261,279,318 r306,312,318,345 r222,234,279,285 w210,213,252,267 w237,246,273,303 r336,354,387,393 r285,306,330,345
w297,300,336,348 w330,351,381,393 w387,396,423,435 w396,432,486,489 w447,468,483,519 r453,474,525,552 r405,411,456,456
w417,429,432,465 r393,405,435,441 w390,402,435,456 r387,411,450,462 r303,306,378,378 w285,294,357,357 w294,324,348,375
w345,351,363,384 w309,330,351,366 w345,348,369,396 r324,333,342,366 w309,321,327,333 r234,237,309,312 w270,291,330,348
w300,309,345,363 w357,357,396,408 r387,396,414,438 r396,402,438,465 r372,384,387,396 w351,357,432,435 r387,390,414,429
r390,396,408,423 r363,384,390,417 w378,381,405,411`.split(/\s+/);
const july = "r-372,-360,-320,-310 r-393,-381,-354,-330 w-423,-399,-363,-351".split(" ");
const october = `r-168,-141,-123,-110 r-153,-144,-97,-75 r-150,-138,-102,-88 r-204,-168,-122,-120 w-204,-186,-158,-145
w-180,-162,-129,-115 w-138,-132,-75,-70 r-107,-102,-67,-55 r-120,-105,-67,-45`.split(/\s+/);

function drawCandles(list, start) {
  list.forEach((c, n) => {
    const up = c[0] === "r";
    const [hi, top, bot, lo] = c.slice(1).split(",").map(v => 330 + Math.round(v / 3));
    const x = barX(start + n);
    add(price, "rect", { x, y: hi, width: 1, height: Math.max(1, lo - hi), fill: up ? "#f00" : "#fff" });
    add(price, "rect", { x: x - 2, y: top, width: 5, height: Math.max(1, bot - top), fill: up ? "#f00" : "#fff" });
    if (up && bot - top > 2) add(price, "rect", { x: x - 1, y: top + 1, width: 3, height: bot - top - 2, fill: "#800000" });
  });
}
drawCandles(candles, 0);
drawCandles(july, 153);
drawCandles(october, 210);

// moving averages, x and y both in thirds of a unit from (0, 330)
const averages = {
  "#ff0": "133,78 181,105 253,151 325,206 373,239 421,268 469,306 493,323 517,343 565,373 613,402 661,430 733,465 805,498 877,529 949,556 1021,579 1045,588 1069,591 1110,600 1165,601 1213,597 1295,595 1357,586 1405,576 1465,573 1549,565 1597,565 1669,560 1693,562 1741,559 1789,553 1861,540 1909,525 1957,507 1981,495 2005,489 2101,447 2173,423 2245,403 2317,384 2360,371",
  "#00c82a": "133,382 157,391 205,402 229,404 253,409 301,429 373,466 445,499 493,541 541,591 589,643 613,676 661,724 709,767 733,787 781,817 805,829 853,847 901,856 949,847 973,838 997,820 1021,796 1045,781 1069,763 1117,711 1165,653 1213,597 1285,512 1381,400 1405,383 1453,342 1501,314 1549,292 1597,284 1633,284 1669,292 1717,312 1741,321 1765,326 1813,346 1861,364 1909,367 1957,374 1981,380 2005,383 2029,387 2065,383 2149,379 2197,371 2245,367 2317,361 2360,362",
  "#6ecff6": "133,412 157,408 181,401 205,398 229,406 253,410 277,420 301,434 349,490 373,521 397,541 445,598 493,675 517,718 541,751 565,775 589,799 613,830 637,857 661,878 685,895 709,898 733,901 757,889 781,883 805,883 829,877 853,862 877,852 925,814 973,778 997,750 1021,711 1069,649 1093,612 1117,568 1141,529 1165,489 1200,434 1237,380 1261,366 1285,347 1309,320 1333,296 1357,286 1381,271 1453,268 1477,274 1501,269 1525,260 1549,264 1573,280 1597,286 1621,297 1645,301 1669,313 1717,353 1741,376 1789,408 1813,412 1861,432 1885,428 1909,418 1981,381 2005,377 2053,357 2077,340 2101,331 2149,339 2197,348 2245,357 2293,372 2317,384 2360,400",
  "#f7931e": "133,364 157,367 181,367 205,402 229,430 253,453 277,474 301,500 349,547 373,585 397,612 421,648 445,675 469,723 493,762 517,819 541,855 565,877 589,881 613,901 637,895 661,898 685,910 709,916 733,900 757,886 781,867 805,852 829,837 853,823 877,816 901,802 925,772 949,753 973,735 997,685 1021,625 1045,588 1069,547 1093,492 1117,452 1141,436 1165,393 1189,361 1213,333 1237,304 1261,296 1285,296 1309,278 1333,259 1357,265 1381,250 1405,246 1429,260 1453,273 1477,283 1501,283 1525,272 1549,268 1573,285 1597,284 1621,303 1645,330 1669,358 1693,385 1717,417 1741,447 1765,454 1789,457 1813,439 1837,430 1861,418 1885,396 1909,378 1933,370 1957,354 1981,342 2005,354 2029,352 2053,345 2077,324 2101,320 2125,314 2149,324 2173,340 2197,373 2221,386 2245,402 2269,404 2293,404 2317,398 2341,403 2360,403"
};
const tails = {
  "#ff0": "1720,296 1740,297 1748,300 1764,301 1787,302",
  "#00c82a": "1720,288 1740,289 1748,290 1756,292 1764,292 1772,296 1787,298",
  "#6ecff6": "1720,311 1740,302 1748,298 1756,292 1764,289 1780,289 1787,286",
  "#f7931e": "1720,301 1732,292 1740,289 1748,281 1764,281 1772,285 1780,287 1787,291"
};
for (const color in averages) {
  const pts = averages[color].split(" ").map(p => {
    const [x, y] = p.split(",");
    return `${(x / 3).toFixed(1)},${(330 + y / 3).toFixed(1)}`;
  }).join(" ");
  add(price, "polyline", { points: pts, fill: "none", stroke: color });
  add(price, "polyline", { points: tails[color], fill: "none", stroke: color });
}
add(price, "polyline", { points: "1754,685 1756,677 1758,685", fill: "none", stroke: "#f7931e" });

// quarterly holdings, one bar per trading day
for (let i = 0; i < 144; i++) {
  const red = i >= 20 && i < 82;
  const top = i < 20 ? 785 : red ? 723 : 876;
  add(holding, "rect", { x: barX(i) - 2, y: top, width: 5, height: 952 - top, fill: red ? "#f00" : "#0f0" });
  add(holding, "rect", { x: barX(i) - 1, y: top + 1, width: 3, height: 950 - top, fill: red ? "#800000" : "#008000" });
}
```
